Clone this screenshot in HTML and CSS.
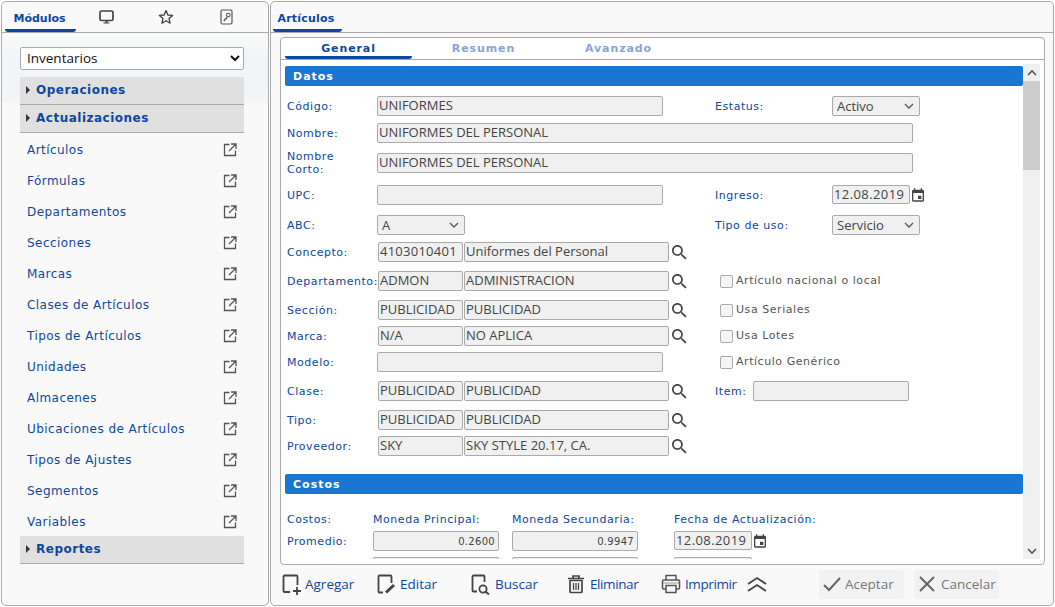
FILE: index.html
```html
<!DOCTYPE html>
<html lang="es">
<head>
    <meta charset="UTF-8">
    <title>Artículos</title>
    <link rel="stylesheet" href="styles.css">
</head>
<body>
    <svg class="sprite" xmlns="http://www.w3.org/2000/svg">
        <symbol id="i-link" viewBox="0 0 14 14"><path d="M6.5 1.5H1.5v11h11v-5M8 1h5v5M13 1L6 8" fill="none" stroke="#555" stroke-width="1.3"/></symbol>
        <symbol id="i-search" viewBox="3 3 18 18"><path fill="#444" d="M15.5 14h-.79l-.28-.27C15.41 12.59 16 11.11 16 9.5 16 5.91 13.09 3 9.5 3S3 5.91 3 9.5 5.91 16 9.5 16c1.61 0 3.09-.59 4.23-1.57l.27.28v.79l5 4.99L20.49 19l-4.99-5zm-6 0C7.01 14 5 11.99 5 9.5S7.01 5 9.5 5 14 7.01 14 9.5 11.99 14 9.5 14z"/></symbol>
        <symbol id="i-date" viewBox="3 1 18 20"><path fill="#444" d="M17 12h-5v5h5v-5zM16 1v2H8V1H6v2H5c-1.11 0-1.99.9-1.99 2L3 19c0 1.1.89 2 2 2h14c1.1 0 2-.9 2-2V5c0-1.1-.9-2-2-2h-1V1h-2zm3 18H5V8h14v11z"/></symbol>
    </svg>

    <div class="app">
        <aside class="panel side">
            <div class="tabs">
                <div class="tab active">Módulos</div>
                <div class="tab icon-tab">
                    <svg width="15" height="14" viewBox="0 0 15 14"><rect x="1" y="1" width="13" height="9.500" rx="1.500" fill="none" stroke="#444" stroke-width="1.700"/><path d="M4.500 12.500h6v1h-6zM6.500 11h2v2h-2z" fill="#444"/></svg>
                </div>
                <div class="tab icon-tab">
                    <svg width="16" height="16" viewBox="0 0 16 16"><path d="M8 1.600l1.900 4.400 4.700.4-3.600 3.100 1.100 4.700L8 11.700l-4.100 2.500L5 9.500 1.400 6.400l4.700-.4z" fill="none" stroke="#444" stroke-width="1.300" stroke-linejoin="round"/></svg>
                </div>
                <div class="tab icon-tab">
                    <svg width="13" height="16" viewBox="0 0 13 16"><rect x="1" y="1" width="11" height="14" rx="1.500" fill="none" stroke="#555" stroke-width="1.200"/><path d="M3.800 12l3.400-3.800" stroke="#555" stroke-width="1.500"/><circle cx="8.300" cy="6" r="1.800" fill="none" stroke="#555" stroke-width="1.100"/></svg>
                </div>
            </div>
            <div class="side-body">
                <select class="module-select"><option>Inventarios</option></select>
                <div class="group">Operaciones</div>
                <div class="group">Actualizaciones</div>
                <a class="menu-link">Artículos <svg width="14" height="14"><use href="#i-link"/></svg></a>
                <a class="menu-link">Fórmulas <svg width="14" height="14"><use href="#i-link"/></svg></a>
                <a class="menu-link">Departamentos <svg width="14" height="14"><use href="#i-link"/></svg></a>
                <a class="menu-link">Secciones <svg width="14" height="14"><use href="#i-link"/></svg></a>
                <a class="menu-link">Marcas <svg width="14" height="14"><use href="#i-link"/></svg></a>
                <a class="menu-link">Clases de Artículos <svg width="14" height="14"><use href="#i-link"/></svg></a>
                <a class="menu-link">Tipos de Artículos <svg width="14" height="14"><use href="#i-link"/></svg></a>
                <a class="menu-link">Unidades <svg width="14" height="14"><use href="#i-link"/></svg></a>
                <a class="menu-link">Almacenes <svg width="14" height="14"><use href="#i-link"/></svg></a>
                <a class="menu-link">Ubicaciones de Artículos <svg width="14" height="14"><use href="#i-link"/></svg></a>
                <a class="menu-link">Tipos de Ajustes <svg width="14" height="14"><use href="#i-link"/></svg></a>
                <a class="menu-link">Segmentos <svg width="14" height="14"><use href="#i-link"/></svg></a>
                <a class="menu-link">Variables <svg width="14" height="14"><use href="#i-link"/></svg></a>
                <div class="group">Reportes</div>
            </div>
        </aside>

        <main class="panel content">
            <div class="tabs main-tabs">
                <div class="tab active">Artículos</div>
            </div>
            <div class="form-box">
                <div class="form-tabs">
                    <div class="form-tab active">General</div>
                    <div class="form-tab">Resumen</div>
                    <div class="form-tab">Avanzado</div>
                </div>
                <div class="form-wrap">
                    <div class="form-scroll">
                        <div class="bar">Datos</div>
                        <div class="fields">
                            <div class="row">
                                <label>Código:</label>
                                <div class="left"><input class="w-code" value="UNIFORMES" readonly></div>
                                <label class="right-label">Estatus:</label>
                                <select class="combo" disabled><option>Activo</option></select>
                            </div>
                            <div class="row">
                                <label>Nombre:</label>
                                <input class="w-name" value="UNIFORMES DEL PERSONAL" readonly>
                            </div>
                            <div class="row">
                                <label class="two-lines">Nombre Corto:</label>
                                <input class="w-name" value="UNIFORMES DEL PERSONAL" readonly>
                            </div>
                            <div class="row">
                                <label>UPC:</label>
                                <div class="left"><input class="w-code" readonly></div>
                                <label class="right-label">Ingreso:</label>
                                <input class="w-date" value="12.08.2019" readonly>
                                <svg class="cal" width="12" height="14"><use href="#i-date"/></svg>
                            </div>
                            <div class="row">
                                <label>ABC:</label>
                                <div class="left"><select class="combo" disabled><option>A</option></select></div>
                                <label class="right-label">Tipo de uso:</label>
                                <select class="combo" disabled><option>Servicio</option></select>
                            </div>
                            <div class="row">
                                <label>Concepto:</label>
                                <div class="left lookup"><input class="w-key digits" value="4103010401" readonly><input class="w-desc" value="Uniformes del Personal" readonly><svg width="15" height="15"><use href="#i-search"/></svg></div>
                            </div>
                            <div class="row">
                                <label>Departamento:</label>
                                <div class="left lookup"><input class="w-key" value="ADMON" readonly><input class="w-desc" value="ADMINISTRACION" readonly><svg width="15" height="15"><use href="#i-search"/></svg></div>
                                <div class="check"><span class="box"></span>Artículo nacional o local</div>
                            </div>
                            <div class="row">
                                <label>Sección:</label>
                                <div class="left lookup"><input class="w-key" value="PUBLICIDAD" readonly><input class="w-desc" value="PUBLICIDAD" readonly><svg width="15" height="15"><use href="#i-search"/></svg></div>
                                <div class="check"><span class="box"></span>Usa Seriales</div>
                            </div>
                            <div class="row">
                                <label>Marca:</label>
                                <div class="left lookup"><input class="w-key" value="N/A" readonly><input class="w-desc" value="NO APLICA" readonly><svg width="15" height="15"><use href="#i-search"/></svg></div>
                                <div class="check"><span class="box"></span>Usa Lotes</div>
                            </div>
                            <div class="row">
                                <label>Modelo:</label>
                                <div class="left"><input class="w-code" readonly></div>
                                <div class="check"><span class="box"></span>Artículo Genérico</div>
                            </div>
                            <div class="row">
                                <label>Clase:</label>
                                <div class="left lookup"><input class="w-key" value="PUBLICIDAD" readonly><input class="w-desc" value="PUBLICIDAD" readonly><svg width="15" height="15"><use href="#i-search"/></svg></div>
                                <label class="item-label">Item:</label>
                                <input class="w-item" readonly>
                            </div>
                            <div class="row">
                                <label>Tipo:</label>
                                <div class="left lookup"><input class="w-key" value="PUBLICIDAD" readonly><input class="w-desc" value="PUBLICIDAD" readonly><svg width="15" height="15"><use href="#i-search"/></svg></div>
                            </div>
                            <div class="row">
                                <label>Proveedor:</label>
                                <div class="left lookup"><input class="w-key" value="SKY" readonly><input class="w-desc" value="SKY STYLE 20.17, CA." readonly><svg width="15" height="15"><use href="#i-search"/></svg></div>
                            </div>
                        </div>

                        <div class="bar">Costos</div>
                        <div class="costs">
                            <label>Costos:</label>
                            <label>Moneda Principal:</label>
                            <label>Moneda Secundaria:</label>
                            <label>Fecha de Actualización:</label>

                            <label class="cost-name">Promedio:</label>
                            <input class="num" value="0.2600" readonly>
                            <input class="num" value="0.9947" readonly>
                            <div class="date-cell"><input class="w-date" value="12.08.2019" readonly><svg class="cal" width="12" height="14"><use href="#i-date"/></svg></div>

                            <label class="cost-name"></label>
                            <input class="num" readonly>
                            <input class="num" readonly>
                            <div class="date-cell"><input class="w-date" readonly></div>
                        </div>
                    </div>
                    <div class="scrollbar">
                        <div class="sb-btn"><svg width="10" height="6" viewBox="0 0 10 6"><path d="M1 5l4-4 4 4" fill="none" stroke="#555" stroke-width="1.6"/></svg></div>
                        <div class="sb-thumb"></div>
                        <div class="sb-track"></div>
                        <div class="sb-btn"><svg width="10" height="6" viewBox="0 0 10 6"><path d="M1 1l4 4 4-4" fill="none" stroke="#555" stroke-width="1.6"/></svg></div>
                    </div>
                </div>
            </div>

            <div class="toolbar">
                <a class="tool t-add">
                    <svg width="20" height="21" viewBox="0 0 20 21"><path d="M8 18H2.500a1 1 0 0 1-1-1V2.500a1 1 0 0 1 1-1h12a1 1 0 0 1 1 1V11" fill="none" stroke="#444" stroke-width="1.800"/><path d="M11 17h8M15 13v8" stroke="#444" stroke-width="1.800"/></svg>
                    Agregar
                </a>
                <a class="tool t-edit">
                    <svg width="20" height="21" viewBox="0 0 20 21"><path d="M6 18.500H2.500a1 1 0 0 1-1-1V2.500a1 1 0 0 1 1-1h11a1 1 0 0 1 1 1V9" fill="none" stroke="#444" stroke-width="1.800"/><path d="M9 18.500l8-7.500" stroke="#444" stroke-width="3"/></svg>
                    Editar
                </a>
                <a class="tool t-find">
                    <svg width="20" height="21" viewBox="0 0 20 21"><path d="M6 17.500H2.500a1 1 0 0 1-1-1V2.500a1 1 0 0 1 1-1h10a1 1 0 0 1 1 1V8" fill="none" stroke="#444" stroke-width="1.800"/><circle cx="12" cy="15" r="3.600" fill="none" stroke="#444" stroke-width="1.800"/><path d="M14.500 17.500l3.500 3" stroke="#444" stroke-width="2"/></svg>
                    Buscar
                </a>
                <a class="tool t-del">
                    <svg width="18" height="20" viewBox="0 0 18 20"><path d="M1 4.500h16M6 4V2h6v2" fill="none" stroke="#444" stroke-width="1.700"/><path d="M3 6.500h12v11a1 1 0 0 1-1 1H4a1 1 0 0 1-1-1z" fill="none" stroke="#444" stroke-width="1.700"/><path d="M6.500 9v7M9 9v7M11.500 9v7" stroke="#444" stroke-width="1.300"/></svg>
                    Eliminar
                </a>
                <a class="tool t-print">
                    <svg width="20" height="20" viewBox="0 0 20 20"><path d="M5 6V1.500h10V6M5 15H2.500a1 1 0 0 1-1-1V7a1 1 0 0 1 1-1h15a1 1 0 0 1 1 1v7a1 1 0 0 1-1 1H15" fill="none" stroke="#555" stroke-width="1.500"/><path d="M5 11.500h10v7H5z" fill="none" stroke="#555" stroke-width="1.500"/><path d="M2 9h16" stroke="#999"/></svg>
                    Imprimir
                </a>
                <svg class="collapse" width="20" height="16" viewBox="0 0 20 16"><path d="M1 8l9-6 9 6M1 15l9-6 9 6" fill="none" stroke="#444" stroke-width="1.800"/></svg>
                <button class="action a-ok">
                    <svg width="18" height="16" viewBox="0 0 18 16"><path d="M1 9l5 5L17 2" fill="none" stroke="#666" stroke-width="2"/></svg>
                    Aceptar
                </button>
                <button class="action a-no">
                    <svg width="16" height="16" viewBox="0 0 16 16"><path d="M1 1l14 14M15 1L1 15" stroke="#666" stroke-width="2"/></svg>
                    Cancelar
                </button>
            </div>
        </main>
    </div>
</body>
</html>
```

FILE: styles.css
```css
* {
    margin: 0;
    padding: 0;
    box-sizing: border-box;
    font-family: "DejaVu Sans", Verdana, sans-serif;
}

html, body {
    height: 100%;
    overflow: hidden;
    background-color: white;
}

.sprite {
    display: none;
}

.app {
    display: flex;
    gap: 1px;
    height: 607px;
    padding: 1px 0 1px 1px;
}

.panel {
    height: 605px;
    background-color: #f9f9f9;
    border: 1px solid #aaa;
    border-radius: 5px;
}

.side {
    width: 268px;
    flex: none;
    background: linear-gradient(#f9f9f9 30px, #f1f4f8 60px, #f3f5f8 100px, #f9f9f9 101px);
}

.content {
    width: 784px;
    flex: none;
}

/* top tabs */
.tabs {
    display: flex;
    height: 31px;
    padding-left: 3px;
    border-bottom: 1px solid #aaa;
    background-color: #f9f9f9;
    border-radius: 5px 5px 0 0;
}

.tab {
    width: 71px;
    height: 30px;
    padding: 10px 2px 0 0;
    text-align: center;
    font-size: 11px;
    font-weight: bold;
    color: #0d47a1;
}

.tab.active {
    border-bottom: 3px solid #0d47a1;
    border-radius: 0 0 3px 3px;
}

.icon-tab {
    width: 60px;
    padding: 0;
    display: flex;
    align-items: center;
    justify-content: center;
}

.main-tabs {
    padding-left: 2px;
}

.main-tabs .tab {
    width: 69px;
    padding-right: 3px;
    letter-spacing: 0.2px;
}

/* left menu */
.side-body {
    padding: 14px 24px 0 18px;
}

.module-select {
    display: block;
    width: 224px;
    height: 23px;
    margin-bottom: 7px;
    padding: 0 0 2px 2px;
    background-color: white;
    border: 1px solid #aaa;
    border-radius: 2px;
    font-family: "Open Sans", sans-serif;
    font-size: 13.500px;
    color: #111;
}

.group {
    height: 28px;
    padding: 6px 0 0 16px;
    position: relative;
    background-color: #e0e0e0;
    border-bottom: 1px solid #aaa;
    font-size: 12px;
    font-weight: bold;
    letter-spacing: 0.5px;
    color: #0d47a1;
}

.group::before {
    content: '';
    position: absolute;
    left: 6px;
    top: 9px;
    border-left: 4px solid #333;
    border-top: 4px solid transparent;
    border-bottom: 4px solid transparent;
}

.menu-link {
    display: flex;
    justify-content: space-between;
    align-items: center;
    height: 31px;
    padding: 2px 7px 0 7px;
    font-size: 12px;
    letter-spacing: 0.45px;
    color: #0d47a1;
}

/* form */
.form-box {
    height: 528px;
    margin: 4px 8px 0 9px;
    padding: 0 0 5px 4px;
    background-color: white;
    border: 1px solid #aaa;
    border-radius: 4px;
}

.form-tabs {
    display: flex;
    gap: 8px;
    height: 22px;
    margin-left: -4px;
    padding-left: 4px;
    border-bottom: 1px solid #aaa;
}

.form-tab {
    width: 127px;
    height: 21px;
    padding-top: 4px;
    text-align: center;
    font-size: 11px;
    font-weight: bold;
    letter-spacing: 0.9px;
    color: #88a3d6;
}

.form-tab.active {
    color: #0d47a1;
    border-bottom: 3px solid #0d47a1;
    border-radius: 0 0 3px 3px;
}

.form-wrap {
    display: flex;
    height: 495px;
    margin-top: 4px;
}

.form-scroll {
    width: 738px;
    padding-top: 2px;
    overflow: hidden;
}

.bar {
    height: 20px;
    padding: 4px 0 0 8px;
    background-color: #1976d2;
    border-radius: 2px;
    font-size: 11px;
    font-weight: bold;
    letter-spacing: 1px;
    color: white;
}

.fields {
    display: grid;
    grid-template-rows: 27px 30px 32px 30px 27px 29px 29px 26px 26px 29px 29px 26px 20px;
    padding-top: 10px;
    margin-bottom: 18px;
}

.row {
    display: flex;
    align-items: flex-start;
}

label {
    flex: none;
    width: 92px;
    padding-left: 2px;
    font-size: 11px;
    line-height: 13px;
    letter-spacing: 0.55px;
    color: #0d47a1;
    position: relative;
    top: 4px;
}

.two-lines {
    width: 92px;
    padding-right: 40px;
    top: -3px;
}

.left {
    flex: none;
    width: 338px;
    display: flex;
    align-items: center;
}

.lookup {
    padding-left: 1px;
    gap: 1px;
}

.lookup svg {
    margin-left: 2px;
}

.right-label {
    width: 117px;
    padding-left: 0;
}

.item-label {
    width: 38px;
    padding-left: 0;
}

input {
    height: 20px;
    background-color: #f0f0f0;
    border: 1px solid #aaa;
    border-radius: 2px;
    padding: 0 1px 2px;
    font-family: "Open Sans", sans-serif;
    font-size: 13px;
    color: #444;
    outline: none;
}

.w-code { width: 286px; }
.w-name { width: 536px; }
.w-key { width: 85px; }
.w-desc { width: 205px; }
.w-item { width: 156px; }

.w-date {
    width: 78px;
    height: 19px;
    letter-spacing: 0.4px;
}

.digits {
    letter-spacing: 0.25px;
}

.combo {
    appearance: none;
    width: 88px;
    height: 20px;
    padding: 0 0 2px 4px;
    border: 1px solid #aaa;
    border-radius: 2px;
    background: #f0f0f0 url("data:image/svg+xml,%3Csvg xmlns='http://www.w3.org/2000/svg' width='10' height='6'%3E%3Cpath d='M1 1l4 4 4-4' fill='none' stroke='%23555' stroke-width='1.300'/%3E%3C/svg%3E") no-repeat right 5px center;
    font-family: "Open Sans", sans-serif;
    font-size: 13px;
    color: #444;
    opacity: 1;
}

.cal {
    margin: 3px 0 0 2px;
}

.check {
    display: flex;
    align-items: center;
    gap: 3px;
    height: 19px;
    margin-left: 5px;
    font-size: 11px;
    letter-spacing: 0.55px;
    color: #555;
}

.box {
    width: 13px;
    height: 13px;
    margin-top: 1px;
    background-color: #f5f5f5;
    border: 1px solid #aaa;
    border-radius: 2px;
}

/* costs */
.costs {
    display: grid;
    grid-template-columns: 88px 139px 162px 1fr;
    grid-template-rows: 37px 26px 26px;
    align-items: end;
}

.costs label {
    width: auto;
    top: 0;
    padding: 0 0 5px 0;
    white-space: nowrap;
}

.costs label:nth-child(4n+1) {
    padding-left: 2px;
}

.costs .cost-name {
    align-self: start;
    padding-bottom: 0;
    top: 4px;
}

.num {
    width: 126px;
    text-align: right;
    padding: 0 3px 0 1px;
    font-family: "DejaVu Sans", sans-serif;
    font-size: 10px;
    letter-spacing: 0.3px;
    align-self: start;
}

.date-cell {
    display: flex;
    align-self: start;
}

/* scrollbar */
.scrollbar {
    width: 17px;
    height: 495px;
    display: flex;
    flex-direction: column;
    background-color: #f0f0f0;
}

.sb-btn {
    height: 17px;
    display: flex;
    align-items: center;
    justify-content: center;
}

.sb-thumb {
    height: 89px;
    background-color: #cdcdcd;
}

.sb-track {
    flex: 1;
}

/* bottom toolbar */
.toolbar {
    display: flex;
    align-items: center;
    height: 37px;
    padding: 1px 0 0 11px;
}

.tool {
    display: flex;
    align-items: center;
    gap: 3px;
    font-family: "Open Sans", sans-serif;
    font-size: 13.500px;
    color: #0d47a1;
}

.t-add { width: 95px; }
.t-edit { width: 94px; }
.t-find { width: 96px; gap: 4px; }
.t-del { width: 94px; gap: 5px; letter-spacing: -0.4px; }
.t-print { width: 86px; gap: 4px; letter-spacing: -0.4px; }

.collapse {
    margin-right: 52px;
}

.action {
    display: flex;
    align-items: center;
    gap: 4px;
    width: 85px;
    height: 29px;
    margin-right: 10px;
    padding-left: 4px;
    background-color: #f2f2f2;
    border: none;
    border-radius: 2px;
    font-family: "Open Sans", sans-serif;
    font-size: 13.500px;
    color: #777;
}

.a-no {
    gap: 6px;
    padding-left: 5px;
}
```
